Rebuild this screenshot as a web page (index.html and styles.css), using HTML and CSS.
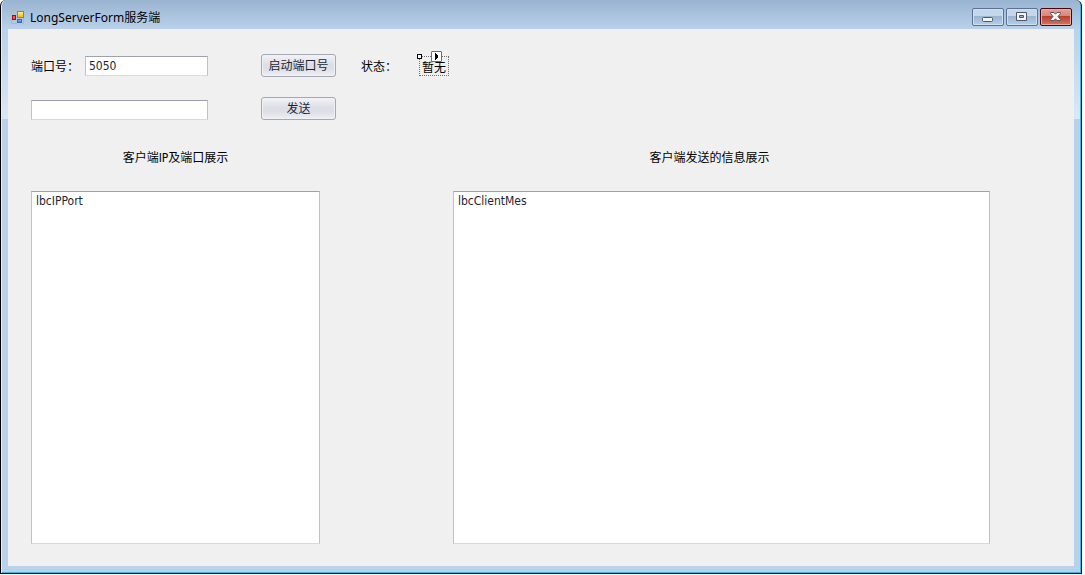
FILE: index.html
```html
<!DOCTYPE html>
<html lang="zh-CN">
<head>
<meta charset="utf-8">
<meta name="viewport" content="width=device-width, initial-scale=1">
<title>LongServerForm服务端</title>
<link rel="stylesheet" href="styles.css">
</head>
<body>
<main class="window">
  <header class="titlebar">
    <svg class="app-icon" width="14" height="14" viewBox="0 0 14 14" aria-hidden="true">
      <defs>
        <linearGradient id="gold" x2="0" y2="1"><stop stop-color="#fff3a0"/><stop offset="1" stop-color="#f4b400"/></linearGradient>
        <linearGradient id="blue" x2="0" y2="1"><stop stop-color="#9cc0ff"/><stop offset="1" stop-color="#3767cf"/></linearGradient>
      </defs>
      <path d="M.5 4V.5H6M.5 9v4.500H6M12.500 8v5.500H11" fill="none" stroke="#b3b6b9"/>
      <rect x="6.500" y="1.500" width="6" height="6" fill="url(#gold)" stroke="#bd7900"/>
      <rect x="1.500" y="5.500" width="3" height="4" fill="#ef5a3c" stroke="#a80c08"/>
      <rect x="6.500" y="9.500" width="4" height="3" fill="url(#blue)" stroke="#3c66bb"/>
    </svg>
    <h1 class="title">LongServerForm服务端</h1>
    <div class="window-buttons">
      <button class="caption-button" type="button" aria-label="最小化">
        <svg width="12" height="10" viewBox="1 1 12 10"><rect x="1.500" y="6.500" width="10" height="4" rx="1" fill="#f4f4f4" stroke="#535666"/></svg>
      </button>
      <button class="caption-button" type="button" aria-label="最大化">
        <svg width="12" height="10" viewBox="1 1 12 10"><path fill-rule="evenodd" d="M1.500 1.500h10v8h-10zM4.500 4.500v2h4v-2z" fill="#f4f4f4" stroke="#535666" stroke-linejoin="round"/></svg>
      </button>
      <button class="caption-button caption-close" type="button" aria-label="关闭">
        <svg width="12" height="10" viewBox="1 1 12 10"><path d="M1.500 1.500h3.500l1.500 1.700L8 1.500h3.500v1L9 5.500l2.500 3v1H8L6.500 7.800 5 9.500H1.500v-1L4 5.500l-2.500-3z" fill="#f7f7f7" stroke="#535666" stroke-linejoin="round"/></svg>
      </button>
    </div>
  </header>
  <section class="client">
    <form class="controls">
      <div class="row">
        <div class="entry">
          <label class="caption" for="port">端口号：</label>
          <input class="text-box" id="port" type="text" value="5050">
        </div>
        <button class="button" type="button">启动端口号</button>
        <div class="status">
          <span class="caption">状态：</span>
          <output class="status-value">暂无<i class="handle"></i><button class="smart-tag" type="button" aria-label="任务"><svg width="9" height="9" viewBox="0 0 9 9"><path d="M3 1v7h1V7h1V6h1V3H5V2H4V1z"/></svg></button></output>
        </div>
      </div>
      <div class="row">
        <div class="entry entry-message">
          <input class="text-box" type="text" aria-label="发送内容">
        </div>
        <button class="button" type="button">发送</button>
      </div>
    </form>
    <div class="panels">
      <div class="panel">
        <label class="panel-title" for="clients">客户端IP及端口展示</label>
        <select class="list-box" id="clients" size="2"><option>lbcIPPort</option></select>
      </div>
      <div class="panel">
        <label class="panel-title panel-title-messages" for="messages">客户端发送的信息展示</label>
        <select class="list-box" id="messages" size="2"><option>lbcClientMes</option></select>
      </div>
    </div>
  </section>
</main>
</body>
</html>
```
FILE: styles.css
```css
* { box-sizing: border-box; }

body {
  margin: 0;
  padding: 0 3px 1px 0;
  height: 100vh;
  background: #fff;
  color: #000;
  font: 12px/16px "DejaVu Sans Condensed", "Noto Sans CJK SC", sans-serif;
}

button, input, select { font: inherit; color: #1f1f35; }

.window {
  display: flex;
  flex-direction: column;
  height: 100%;
  padding: 0 6px 7px;
  border: 1px solid #000;
  border-top: 0;
  border-radius: 6px 6px 0 0;
  background:
    linear-gradient(#99b4d1, #b9d1ea) top / 100% 29px no-repeat,
    linear-gradient(#b9d1ea 29px, #dbe7f5 119px, #b9d1ea 119px);
  box-shadow: inset 1px 0 #e2eefa, inset -1px -1px #22c4e8;
}

.titlebar {
  display: flex;
  align-items: center;
  flex: none;
  height: 29px;
  padding: 5px 3px 0 4px;
}

.app-icon { flex: none; margin-right: 5px; }

.title {
  flex: 1;
  margin: 0;
  padding-top: 2px;
  font: 12px/16px "Noto Sans", "Noto Sans CJK SC", sans-serif;
}

.window-buttons { display: flex; gap: 2px; }

.caption-button {
  display: flex;
  align-items: center;
  justify-content: center;
  width: 32px;
  height: 18px;
  padding: 0;
  border: 1px solid #5c7090;
  border-radius: 2px;
  background: linear-gradient(#c3d6ea 44%, #98b4d1 45%, #b4cfe9);
  box-shadow: inset 0 0 0 1px #d0e0f0;
}

.caption-button svg { overflow: visible; }

.caption-close {
  border-color: #42081a;
  background: linear-gradient(#e5a196, #d88678 44%, #b8402a 45%, #d47464);
  box-shadow: inset 0 0 0 1px #e9aca2;
}

.client {
  display: flex;
  flex: 1;
  flex-direction: column;
  margin: 0 1px;
  padding: 25px 84px 22px 23px;
  background: #f0f0f0;
}

.controls { display: grid; gap: 20px; }

.row { display: flex; }

.entry {
  display: flex;
  align-items: center;
  gap: 7px;
  width: 177px;
  margin-right: 53px;
}

.entry-message { align-items: flex-end; }

.caption {
  flex: none;
  padding-top: 3px;
  line-height: 20px;
  white-space: nowrap;
}

.entry .caption { width: 47px; }

.text-box {
  flex: 1;
  min-width: 0;
  height: 20px;
  padding: 1px 3px 0;
  border: 1px solid #c0c0cc;
  border-top-color: #a0a0ae;
  border-bottom-color: #dadade;
  background: #fff;
}

.button {
  width: 75px;
  height: 23px;
  padding: 1px 0 0;
  border: 1px solid #a5a8b1;
  border-radius: 3px;
  background: linear-gradient(#f3f4f8, #dddfe6 45%, #dddfe6 65%, #eff0f4);
  box-shadow: inset 0 0 0 1px #f0f1f5;
  white-space: nowrap;
}

.status { display: flex; align-items: flex-start; gap: 22px; margin-left: 25px; }

.status .caption { width: 36px; }

.status-value {
  position: relative;
  width: 30px;
  height: 20px;
  margin-top: 2px;
  border: 1px dotted #707070;
  line-height: 22px;
  text-align: center;
}

.handle {
  position: absolute;
  top: -3px;
  left: -3px;
  width: 5px;
  height: 5px;
  border: 1px solid #000;
  background: #fff;
}

.smart-tag {
  position: absolute;
  top: -6px;
  left: 11px;
  display: flex;
  width: 11px;
  height: 11px;
  padding: 0;
  border: 1px solid #70705e;
  border-radius: 1px;
  background: #fff;
}

.panels {
  display: grid;
  flex: 1;
  grid-template-columns: 289fr 537fr;
  gap: 133px;
  margin-top: 29px;
}

.panel { display: flex; flex-direction: column; gap: 24px; }

.panel-title { line-height: 18px; text-align: center; }

.panel-title-messages { padding-right: 24px; }

.list-box {
  flex: 1;
  width: 100%;
  padding: 2px;
  border: 1px solid #c0c0cc;
  border-top-color: #a0a0ae;
  border-bottom-color: #dadade;
  border-radius: 0;
  background: #fff;
  overflow: hidden;
}

.list-box option { padding: 0 2px; min-height: 16px; }
```
